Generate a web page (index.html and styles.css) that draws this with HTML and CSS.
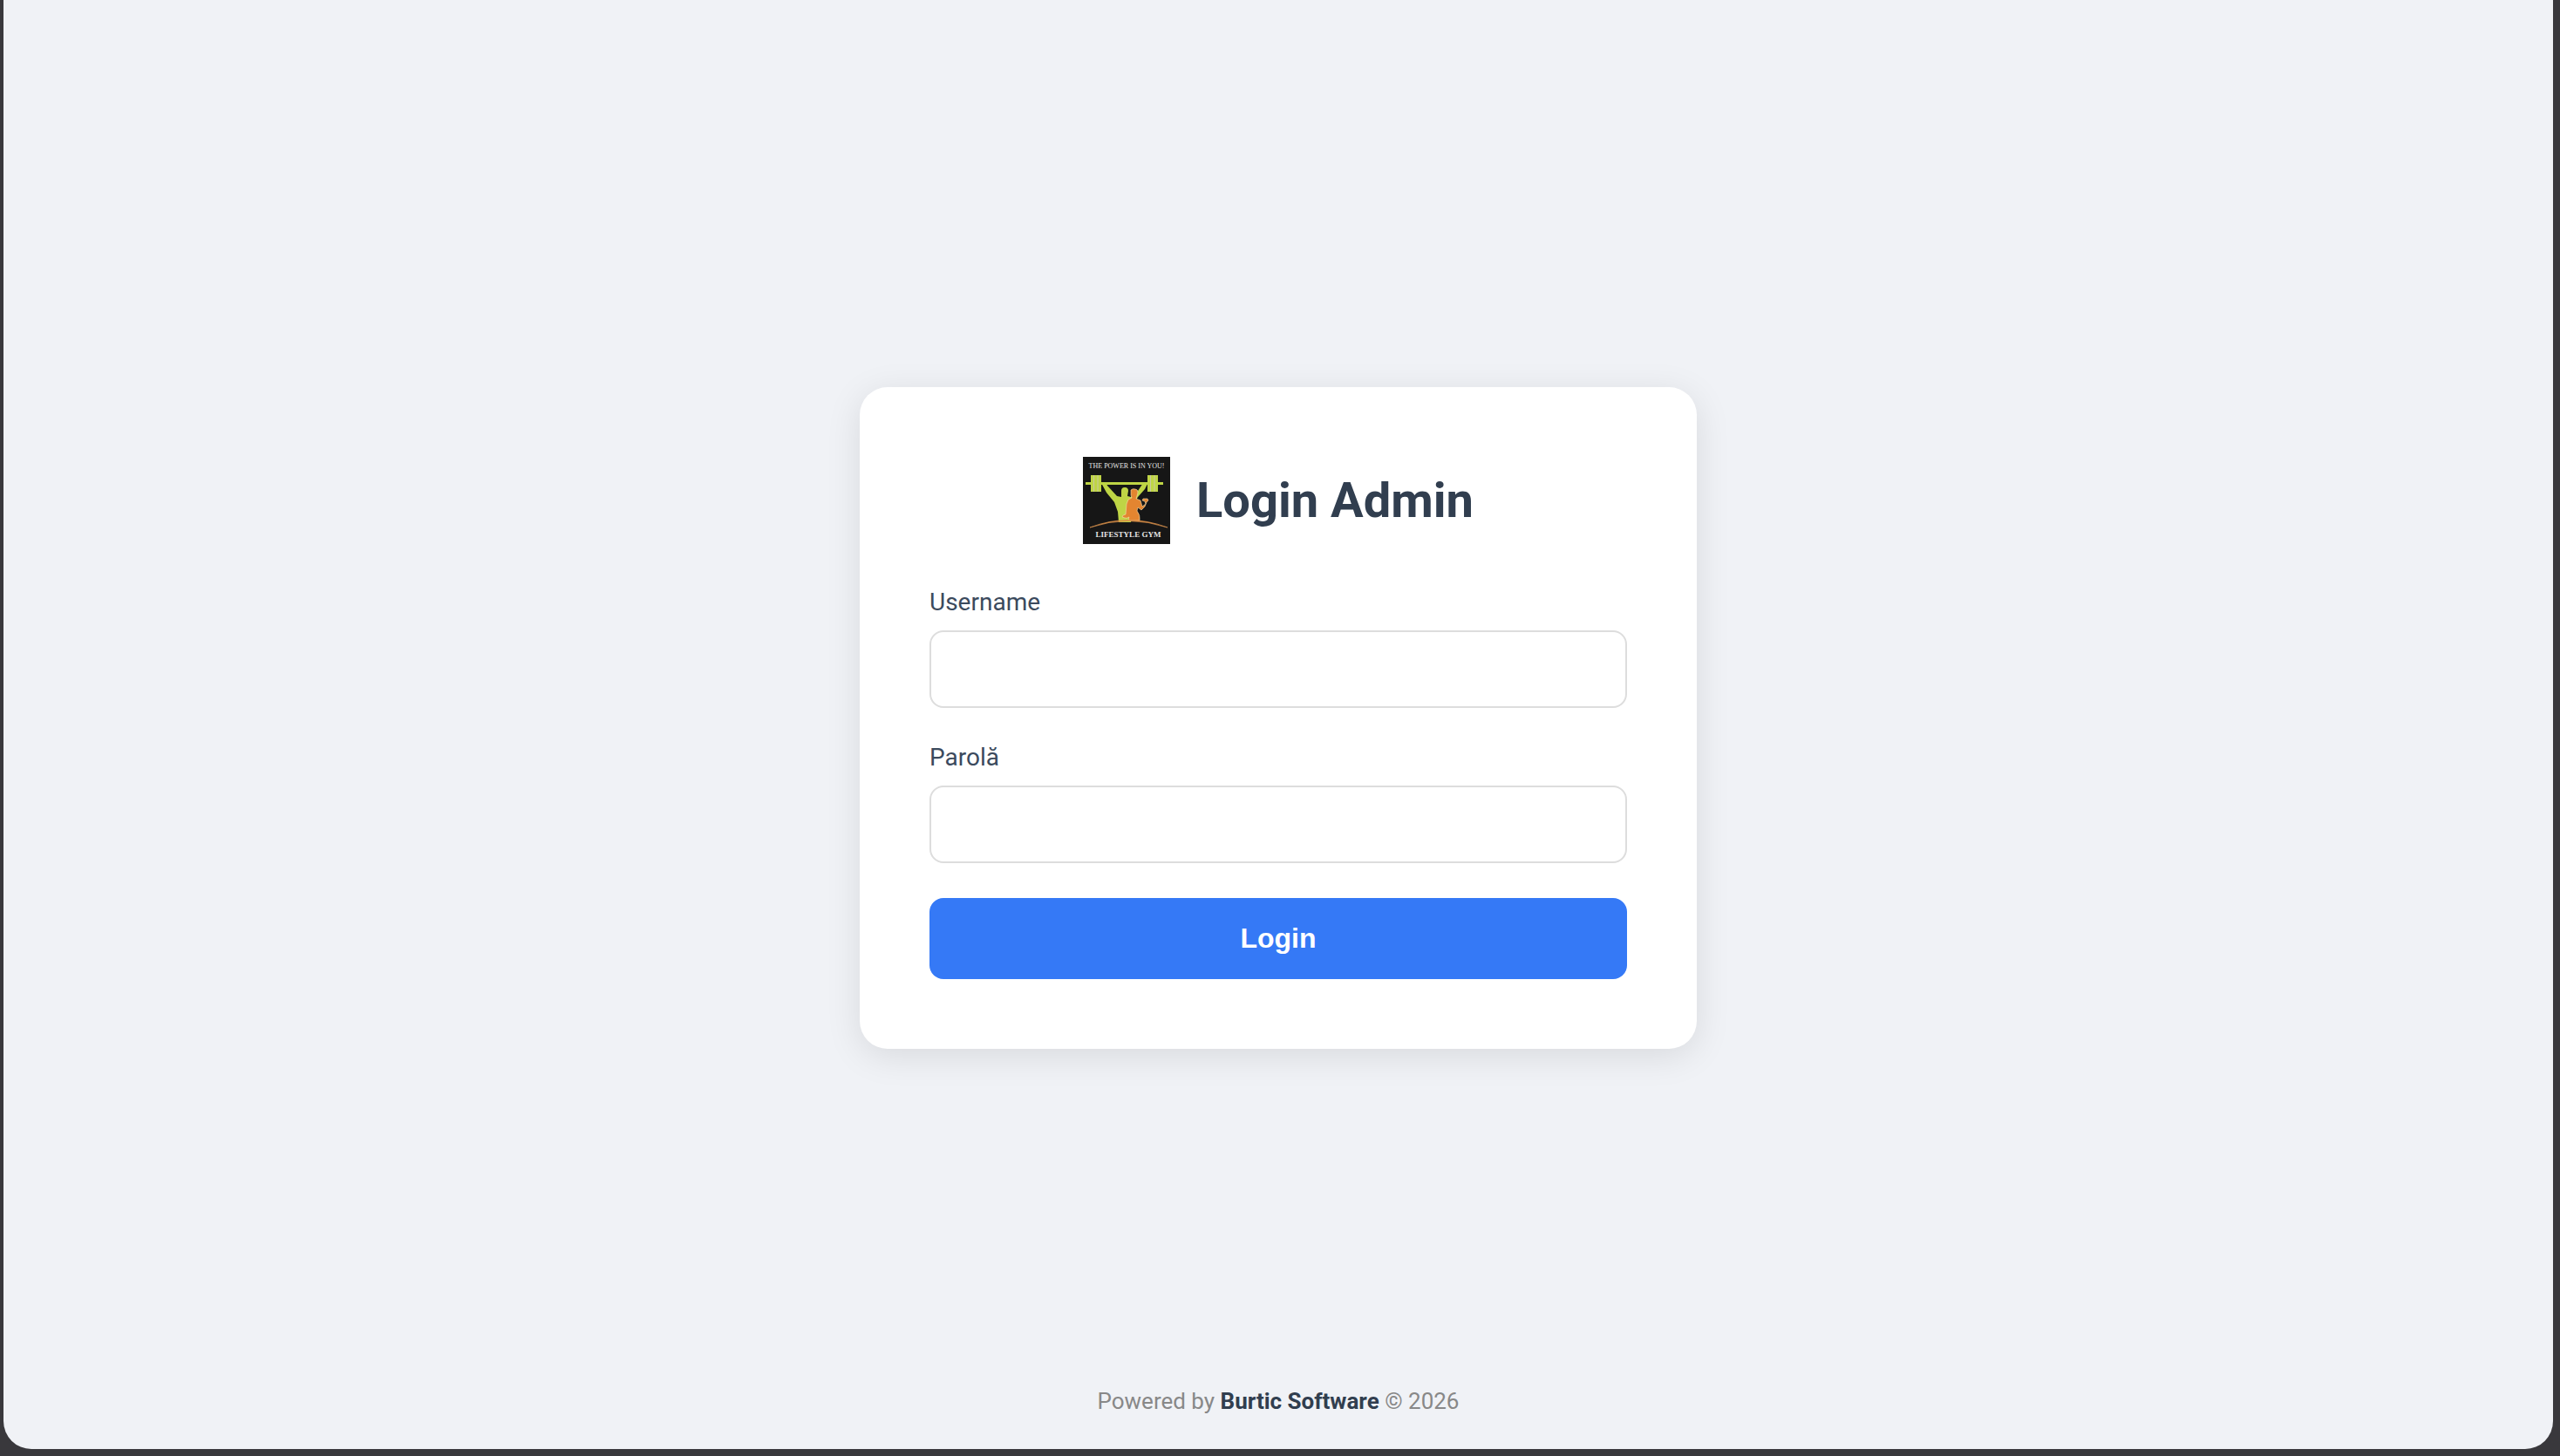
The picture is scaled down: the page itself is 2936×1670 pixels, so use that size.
FILE: index.html
```html
<!DOCTYPE html>
<html lang="ro">
<head>
  <meta charset="UTF-8">
  <title>Login Admin</title>
  <meta name="viewport" content="width=device-width, initial-scale=1.0">
  <link rel="stylesheet" href="styles.css">
</head>
<body>

  <div class="page">
    <main>
      <form class="login-card">
        <div class="login-header">
          <svg class="logo" viewBox="0 0 100 100" role="img" aria-label="Lifestyle Gym">
            <rect width="100" height="100" fill="#161616"/>
            <text class="logo-text" x="50" y="13" font-size="8">THE POWER IS IN YOU!</text>
            <!-- Barbell -->
            <g fill="#bfd545">
              <rect x="3" y="29" width="89" height="3"/>
              <rect x="9" y="21" width="12" height="19"/>
              <rect x="74" y="21" width="12" height="19"/>
            </g>
            <path d="M12.5 21v19M17 21v19M77.500 21v19M82 21v19" stroke="#c9c9a0" stroke-width="1"/>
            <!-- Man -->
            <path fill="#bfd545" d="M21 30l5-1 2 4 11 12 5 1V39q0-4 4-4 4 0 4 4l-1 6 4 1 8-7 6-9 5 1-3 6-8 9-5 9-3 20H41l-1-12-4-11-9-11z"/>
            <!-- Woman -->
            <path fill="#e38530" stroke="#f3dfae" stroke-width="0.6" d="M55 38q2-2 5-1 3 0 3 4l-1 4-1 3 5 2 2 7 4-3-1-3-3-1 1-2 5 0 1 2-2 2-2 5-4 4-4-3-1 4q4 5 3 11H53q-1-3 0-4-3 2-5 1l-3-1 1-2 3-1 1-12 2-5 4-2-1-3z"/>
            <path d="M8 81Q52 64 97 81Q52 66 8 81z" fill="#e38530" stroke="#d9924f" stroke-width="0.7"/>
            <text class="logo-text gym-name" x="52" y="92" font-size="9">LIFESTYLE GYM</text>
          </svg>
          <h1>Login Admin</h1>
        </div>

        <label for="username">Username</label>
        <input type="text" id="username" name="username">

        <label for="password">Parolă</label>
        <input type="password" id="password" name="password">

        <button type="submit">Login</button>
      </form>
    </main>

    <footer>
      Powered by <strong>Burtic Software</strong> © 2026
    </footer>
  </div>

</body>
</html>
```

FILE: styles.css
```css
* {
  box-sizing: border-box;
  margin: 0;
  padding: 0;
}

body {
  font-family: Roboto, sans-serif;
  background: #39383c;
  color: #313e4f;
  padding: 0 8px 8px 4px;
}

.page {
  display: flex;
  flex-direction: column;
  min-height: calc(100vh - 8px);
  background: #f0f2f6;
  border-radius: 0 0 32px 32px;
}

main {
  flex: 1;
  display: flex;
  align-items: center;
  justify-content: center;
  padding-top: 54px;
}

.login-card {
  width: 100%;
  max-width: 960px;
  padding: 80px;
  background: white;
  border-radius: 32px;
  box-shadow: 0 8px 40px rgba(0, 0, 0, 0.1);
}

.login-header {
  display: flex;
  align-items: center;
  justify-content: center;
  gap: 30px;
  margin-bottom: 50px;
}

.logo {
  width: 100px;
  height: 100px;
}

.logo-text {
  font-family: "Liberation Serif", serif;
  fill: #e4e4e4;
  text-anchor: middle;
}

.gym-name {
  font-weight: bold;
}

h1 {
  font-size: 56px;
  font-weight: 700;
}

label {
  display: block;
  font-size: 28px;
  line-height: 33px;
  margin-bottom: 16px;
  color: #3b4a5d;
}

input {
  display: block;
  width: 100%;
  height: 89px;
  padding: 0 28px;
  font-size: 30px;
  background: white;
  border: 2px solid #dddddd;
  border-radius: 16px;
  margin-bottom: 40px;
}

button {
  display: block;
  width: 100%;
  height: 93px;
  font-family: "Liberation Sans", Arial, sans-serif;
  font-size: 32px;
  font-weight: bold;
  background: #3579f6;
  color: white;
  border: none;
  border-radius: 16px;
  cursor: pointer;
}

button:hover {
  background: #2563d8;
}

footer {
  padding-bottom: 40px;
  text-align: center;
  font-size: 26px;
  line-height: 30px;
  color: #888888;
}

footer strong {
  color: #313e4f;
}
```
